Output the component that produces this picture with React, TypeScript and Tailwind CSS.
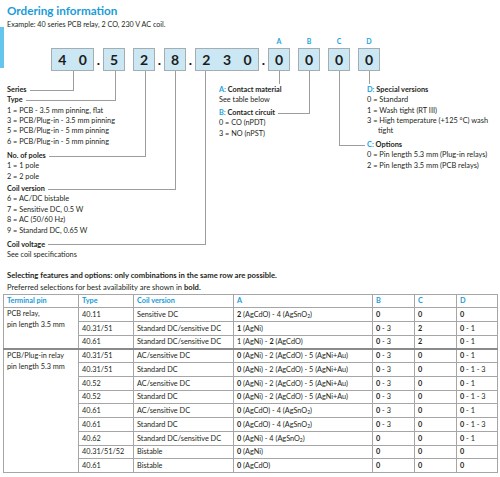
import React from "react";

const LINE = "bg-[#9d9d9d]";

function Box({ digits, w }: { digits: string; w: string }) {
  return (
    <div className={`flex h-[23px] items-center justify-around border border-[#a3adb2] bg-[#cbe7f4] ${w}`}>
      {digits.split("").map((d, i) => (
        <span key={i} className="text-[14px] font-bold leading-none text-[#1d1d1b]">
          {d}
        </span>
      ))}
    </div>
  );
}

function Dot() {
  return <div className="w-[9px] text-center text-[14px] font-bold leading-[23px] text-[#1d1d1b]">.</div>;
}

function Gap() {
  return <div className="w-[8px]" />;
}

function Lab({ l, d }: { l: string; d: string }) {
  return (
    <div className="flex flex-col items-center">
      <div className="mb-[3px] text-[7px] font-bold leading-[8px] text-[#1ba3df]">{l}</div>
      <Box digits={d} w="w-[22px]" />
    </div>
  );
}

function Hdr({ t, w }: { t: string; w: string }) {
  return (
    <div className={`flex items-center ${w}`}>
      <span className="font-bold">{t}</span>
      <span className={`ml-[3px] h-px flex-1 ${LINE}`} />
    </div>
  );
}

const Bl = ({ c }: { c: React.ReactNode }) => <b className="font-bold">{c}</b>;
const SnO = (
  <>
    (AgSnO<sub className="text-[5px]">2</sub>)
  </>
);
const NiCdAu = (
  <>
    <Bl c="0" /> (AgNi) - 2 (AgCdO) - 5 (AgNi+Au)
  </>
);
const CdSn = (
  <>
    <Bl c="0" /> (AgCdO) - 4 {SnO}
  </>
);
const b0 = <Bl c="0" />;
const b03 = (
  <>
    <Bl c="0" /> - 3
  </>
);
const b01 = (
  <>
    <Bl c="0" /> - 1
  </>
);
const b013 = (
  <>
    <Bl c="0" /> - 1 - 3
  </>
);

type Row = { type: string; coil: string; a: React.ReactNode; b: React.ReactNode; c: React.ReactNode; d: React.ReactNode };

const rows: Row[] = [
  { type: "40.11", coil: "Sensitive DC", a: <><Bl c="2" /> (AgCdO) - 4 {SnO}</>, b: b0, c: b0, d: b0 },
  { type: "40.31/51", coil: "Standard DC/sensitive DC", a: <><Bl c="1" /> (AgNi)</>, b: b03, c: <Bl c="2" />, d: b01 },
  { type: "40.61", coil: "Standard DC/sensitive DC", a: <>1 (AgNi) - <Bl c="2" /> (AgCdO)</>, b: b03, c: <Bl c="2" />, d: b01 },
  { type: "40.31/51", coil: "AC/sensitive DC", a: NiCdAu, b: b03, c: b0, d: b01 },
  { type: "40.31/51", coil: "Standard DC", a: NiCdAu, b: b03, c: b0, d: b013 },
  { type: "40.52", coil: "AC/sensitive DC", a: NiCdAu, b: b03, c: b0, d: b01 },
  { type: "40.52", coil: "Standard DC", a: NiCdAu, b: b03, c: b0, d: b013 },
  { type: "40.61", coil: "AC/sensitive DC", a: CdSn, b: b03, c: b0, d: b01 },
  { type: "40.61", coil: "Standard DC", a: CdSn, b: b03, c: b0, d: b013 },
  { type: "40.62", coil: "Standard DC/sensitive DC", a: <><Bl c="0" /> (AgNi) - 4 {SnO}</>, b: b0, c: b0, d: b01 },
  { type: "40.31/51/52", coil: "Bistable", a: <><Bl c="0" /> (AgNi)</>, b: b0, c: b0, d: b0 },
  { type: "40.61", coil: "Bistable", a: <><Bl c="0" /> (AgCdO)</>, b: b0, c: b0, d: b0 },
];

const td = "border border-[#a6a6a6] px-[3px] align-middle leading-none whitespace-nowrap";
const th = "border border-[#a6a6a6] px-[3px] text-left align-middle font-bold leading-none text-[#1a9bd7]";

export default function App() {
  return (
    <div className="relative h-[477px] w-[500px] overflow-hidden bg-white font-[Lato,'Liberation_Sans',sans-serif] text-[#231f20]">
      <div className="absolute left-0 top-[27px] h-[41px] w-[4px] bg-[#66c5ec]" />

      <h1 className="pl-[7px] pt-[2px] text-[11.7px] font-bold leading-[16px] text-[#1a9bd7]">Ordering information</h1>
      <p className="mt-[2px] pl-[7px] text-[7.2px] leading-[10px]">Example: 40 series PCB relay, 2 CO, 230 V AC coil.</p>

      <div className="ml-[51px] mt-[7px] flex items-end">
        <Box digits="40" w="w-[43px]" />
        <Dot />
        <Box digits="5" w="w-[22px]" />
        <Gap />
        <Box digits="2" w="w-[22px]" />
        <Dot />
        <Box digits="8" w="w-[22px]" />
        <Dot />
        <Box digits="230" w="w-[64px]" />
        <Dot />
        <Lab l="A" d="0" />
        <Gap />
        <Lab l="B" d="0" />
        <Gap />
        <Lab l="C" d="0" />
        <Gap />
        <Lab l="D" d="0" />
      </div>

      <div className="flex whitespace-nowrap pt-[13.8px] text-[7.3px] leading-[10.4px]">
        <div className="w-[219px] pl-[7px]">
          <Hdr t="Series" w="w-[67px]" />
          <Hdr t="Type" w="w-[109px]" />
          <div>1 = PCB - 3.5 mm pinning, flat</div>
          <div>3 = PCB/Plug-in - 3.5 mm pinning</div>
          <div>5 = PCB/Plug-in - 5 mm pinning</div>
          <div>6 = PCB/Plug-in - 5 mm pinning</div>
          <div className="mt-[3.6px]">
            <Hdr t="No. of poles" w="w-[139px]" />
            <div>1 = 1 pole</div>
            <div>2 = 2 pole</div>
          </div>
          <div className="mt-[2px]">
            <Hdr t="Coil version" w="w-[169px]" />
            <div>6 = AC/DC bistable</div>
            <div>7 = Sensitive DC, 0.5 W</div>
            <div>8 = AC (50/60 Hz)</div>
            <div>9 = Standard DC, 0.65 W</div>
          </div>
          <div className="mt-[3.6px]">
            <Hdr t="Coil voltage" w="w-[199px]" />
            <div>See coil specifications</div>
          </div>
        </div>

        <div className="w-[148px]">
          <div className="font-bold">
            <span className="text-[#1ba3df]">A:</span> Contact material
          </div>
          <div>See table below</div>
          <div className="mt-[2.2px] flex w-[91px] items-center">
            <span className="font-bold">
              <span className="text-[#1ba3df]">B:</span> Contact circuit
            </span>
            <span className={`ml-[3px] h-px flex-1 ${LINE}`} />
          </div>
          <div>0 = CO (nPDT)</div>
          <div>3 = NO (nPST)</div>
        </div>

        <div className="flex-1 text-[7.4px]">
          <div className="font-bold">
            <span className="text-[#1ba3df]">D:</span> Special versions
          </div>
          <div>0 = Standard</div>
          <div>1 = Wash tight (RT III)</div>
          <div>3 = High temperature (+125 °C) wash</div>
          <div className="pl-[11px]">tight</div>
          <div className="-ml-[28px] mt-[3px] flex items-center">
            <span className={`h-px w-[26px] ${LINE}`} />
            <span className="ml-[2px] font-bold">
              <span className="text-[#1ba3df]">C:</span> Options
            </span>
          </div>
          <div>0 = Pin length 5.3 mm (Plug-in relays)</div>
          <div>2 = Pin length 3.5 mm (PCB relays)</div>
        </div>
      </div>

      <div className="mt-[8.6px] pl-[7px] leading-[12px]">
        <p className="text-[7.7px] font-bold">Selecting features and options: only combinations in the same row are possible.</p>
        <p className="text-[7.6px]">
          Preferred selections for best availability are shown in <b className="font-bold">bold.</b>
        </p>
      </div>

      <table className="ml-[3px] mt-[1px] w-[494px] table-fixed border-collapse text-[7.3px]">
        <colgroup>
          <col className="w-[75px]" />
          <col className="w-[55px]" />
          <col className="w-[100px]" />
          <col className="w-[139px]" />
          <col className="w-[42px]" />
          <col className="w-[42px]" />
          <col className="w-[41px]" />
        </colgroup>
        <thead>
          <tr className="h-[13px]">
            <th className={th}>Terminal pin</th>
            <th className={th}>Type</th>
            <th className={th}>Coil version</th>
            <th className={th}>A</th>
            <th className={th}>B</th>
            <th className={th}>C</th>
            <th className={th}>D</th>
          </tr>
        </thead>
        <tbody>
          {rows.map((r, i) => (
            <tr key={i} className={`h-[13.75px] ${i === 3 ? "border-t-2 border-[#8a8a8a]" : ""}`}>
              {i === 0 && (
                <td rowSpan={3} className="border border-[#a6a6a6] px-[3px] pt-0 align-top leading-[11px]">
                  PCB relay,
                  <br />
                  pin length 3.5 mm
                </td>
              )}
              {i === 3 && (
                <td rowSpan={9} className="border border-[#a6a6a6] px-[3px] pt-0 align-top leading-[11px]">
                  PCB/Plug-in relay
                  <br />
                  pin length 5.3 mm
                </td>
              )}
              <td className={td}>{r.type}</td>
              <td className={td}>{r.coil}</td>
              <td className={td}>{r.a}</td>
              <td className={td}>{r.b}</td>
              <td className={td}>{r.c}</td>
              <td className={td}>{r.d}</td>
            </tr>
          ))}
        </tbody>
      </table>

      <svg className="pointer-events-none absolute left-0 top-0" width="500" height="477" viewBox="0 0 500 477">
        <g stroke="#9d9d9d" strokeWidth="1" fill="none">
          <line x1="73.5" y1="71" x2="73.5" y2="90.5" />
          <line x1="115.5" y1="71" x2="115.5" y2="101" />
          <line x1="145.5" y1="71" x2="145.5" y2="156.5" />
          <line x1="175.5" y1="71" x2="175.5" y2="189" />
          <line x1="205.5" y1="71" x2="205.5" y2="245" />
          <line x1="279.5" y1="71" x2="279.5" y2="84" />
          <line x1="309.5" y1="71" x2="309.5" y2="113" />
          <line x1="339.5" y1="71" x2="339.5" y2="145" />
          <line x1="369.5" y1="71" x2="369.5" y2="84" />
        </g>
      </svg>
    </div>
  );
}
